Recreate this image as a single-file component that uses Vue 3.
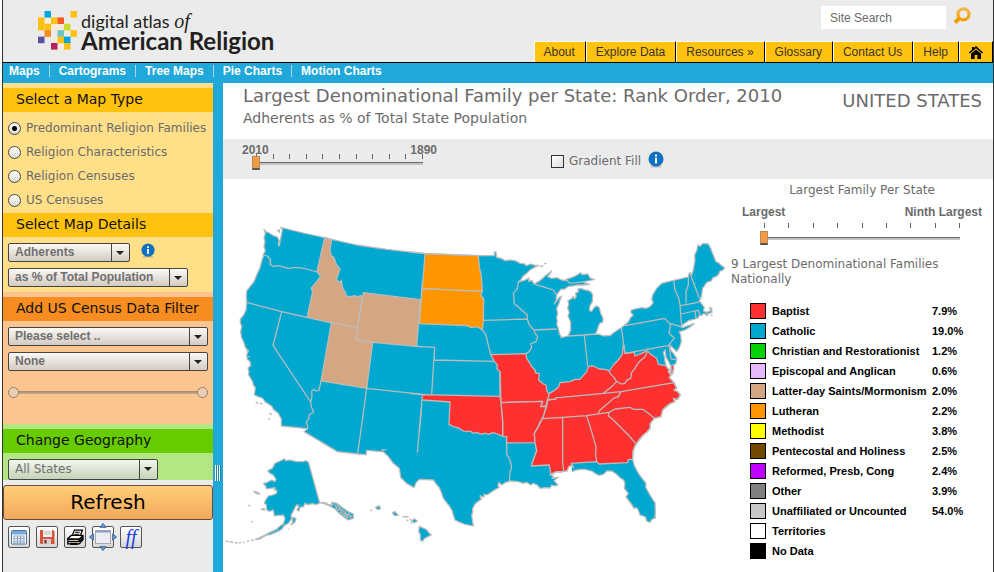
<script setup>
import { ref } from 'vue'

const yellow = '#fdc113'
const blue = '#00a9dd'
const mosaic = [
  [1, 0, blue], [5, 0, yellow], [0, 1, yellow], [2, 1, yellow], [3, 1, '#f05a22'],
  [0, 2, yellow], [1, 2, yellow], [4, 2, '#c8dc28'], [1, 3, '#f68b1f'], [3, 3, '#6cc5bf'],
  [5, 3, yellow], [0, 4, '#5a4fa2'], [3, 4, yellow], [4, 4, blue], [2, 5, '#b9205f'], [4, 5, yellow],
]
const mosaicPale = [[1, 1], [2, 2], [2, 4], [3, 5], [3, 2]]

const siteLinks = ['About', 'Explore Data', 'Resources »', 'Glossary', 'Contact Us', 'Help']
const sections = ['Maps', 'Cartograms', 'Tree Maps', 'Pie Charts', 'Motion Charts']
const mapTypes = [
  'Predominant Religion Families',
  'Religion Characteristics',
  'Religion Censuses',
  'US Censuses',
]
const mapType = ref(mapTypes[0])
const year = ref(0)
const rank = ref(0)
const gradientFill = ref(false)

const families = [
  ['Baptist', '7.9%', '#ff3030'],
  ['Catholic', '19.0%', '#00a8cf'],
  ['Christian and Restorationist', '1.2%', '#06d006'],
  ['Episcopal and Anglican', '0.6%', '#e6b9ff'],
  ['Latter-day Saints/Mormonism', '2.0%', '#d4a682'],
  ['Lutheran', '2.2%', '#ff9600'],
  ['Methodist', '3.8%', '#ffff00'],
  ['Pentecostal and Holiness', '2.5%', '#714a00'],
  ['Reformed, Presb, Cong', '2.4%', '#bf00ff'],
  ['Other', '3.9%', '#808080'],
  ['Unaffiliated or Uncounted', '54.0%', '#c8c8c8'],
  ['Territories', '', '#ffffff'],
  ['No Data', '', '#000000'],
]

/* Each map region has its own origin; one map unit is a third of a pixel. */
const westCoast =
  'M570 116L553 115 500 110 440 103 350 90 275 73 254 68 190 54 122 37 127 45 124 60 121 75 118 92 115 92 117 76 112 66 100 62 88 54 78 50 72 43 76 56 72 68 75 80 72 95 76 108 70 118 70 124 66 135 60 158 50 180 42 200 30 215 20 228 19 245 20 262 18 285 10 302 1 312 1 322 5 335 2 350 4 365 12 383 16 397 25 408 20 420 22 432 30 440 32 452 24 458 27 472 25 478 38 500 40 510 46 518 43 540 60 547 68 550 75 560 95 573 100 583 115 595 124 612 124 633 203 641 192 650 292 710 355 717 379 719 379 706 425 710'
const centralNorth =
  'M0 66L45 71 205 77 253 77 253 66 258 66 260 82 275 86 285 92 300 90 318 93 330 100 342 101 350 107 362 102 374 106 386 106 372 113 360 120 350 130 340 138 332 150 325 156 343 151 358 144 356 154 366 152 372 162'
const lakeMichigan =
  'M440 195L438 210 433 222 442 210 448 202 455 198 450 210 446 222 440 235 443 250 440 262 442 275 440 283 445 295 448 310 453 320 460 325 472 318'
const gulf =
  'M490 712L486 698 478 706 474 712 472 722 462 724 450 727 440 725 428 732 420 735 430 738 426 745 445 742 432 752 444 765 434 768 425 765 420 774 405 773 390 775 382 765 370 760 362 765 350 757 340 760 325 755 300 753 285 758 275 765 266 757 264 767 268 772 250 782 232 794 222 793 222 802 210 797 214 808 205 814 195 822 188 835 188 848 185 855 187 870 190 888 165 883 150 877 135 870 130 855 127 843 118 828 110 818 100 805 95 790 88 773 80 764 70 750 50 749 28 748 18 758 12 773 -10 760 -28 742 -30 727 -32 715 -50 700 -65 680 -80 665'
const eastCoast =
  'M25 303L72 300 105 297 118 298 130 303 142 302 150 302 165 290 184 278 204 262 212 248 220 240 213 234 213 226 225 222 245 218 258 220 270 215 280 203 275 193 278 180 290 160 305 145 341 136 385 126 387 115 392 113 395 120 400 105 402 92 405 78 404 60 411 45 413 30 420 34 430 25 445 27 452 40 458 56 463 68 468 80 476 84 485 92 494 98 488 106 480 108 476 118 468 125 460 127 453 138 440 142 432 155 428 158 426 172 424 185 418 198 426 208 433 217 430 228 440 232 452 227 448 217 455 220 456 232 440 238 430 236 425 242 418 240 415 248 405 252 385 257 370 268 362 275 368 278 403 265 395 273 375 285 358 290 362 300 364 320 358 338 350 350 342 342 330 330 332 345 340 355 350 370 348 385 340 391 342 400 337 418 332 420 334 402 332 392 326 380 318 366 316 345 310 352 314 370 316 385 320 395 328 405 325 410 333 420 328 428 342 443 350 460 342 465 353 470 361 480 352 494 340 490 345 500 330 506 318 515 308 525 303 545 283 550 275 560 271 566 270 580 262 590 250 600 240 610 232 622 224 635 219 650 218 673 223 692 235 715 250 735 258 745 257 757 270 780 278 793 285 803 286 830 285 848 276 853 270 862 260 858 258 850 255 845 240 840 235 826 230 818 222 820 215 808 205 795 198 785 205 776 197 765 193 760 195 745 191 735 180 728 170 718 155 708 140 708 130 718 118 721 110 718 95 708 75 703 60 703 45 706 36 710'
const michigan =
  'M25 303L32 285 32 262 24 243 28 232 23 220 26 208 24 197 28 195 36 190 40 183 43 192 49 184 46 175 56 170 53 163 62 160 75 165 84 166 92 170 98 180 97 200 90 212 88 226 95 229 102 218 110 212 118 218 122 235 126 244 129 250 128 262 120 264 116 272 110 290 105 297'
const south =
  'M-86 693L-32 690 -28 717 -10 710 11 709 22 707 25 697 33 691 41 698 34 685 110 680 117 687 203 683 205 673 218 673 219 650 224 635 232 622 250 600 262 590 270 580 271 566 283 550 303 545 308 525 330 506 345 500 340 490 352 494 361 480 353 470 342 465 350 460 342 443 328 428 333 420 325 410 328 405 316 392 295 388 290 370 272 358 262 347 245 355 225 363 223 352 195 355 190 325 187 358 172 378 160 390 148 408 135 403 118 402 100 393 85 395 80 410 60 433 45 433 30 440 0 443 -5 457 -15 465 -32 475 -36 492 -40 513 -50 545 -65 575 -77 595 -75 623 -70 647 -80 675Z'
</script>

<template>
  <div class="page">
    <header class="top">
      <h1 class="brand">
        <svg class="mosaic" viewBox="0 0 39 39" aria-hidden="true">
          <rect v-for="[c, r] in mosaicPale" :key="`p${c}${r}`" :x="c * 6.5" :y="r * 6.4" width="6.5" height="6.4" fill="#f6ecd9" />
          <rect v-for="[c, r, fill] in mosaic" :key="`${c}${r}`" :x="c * 6.5" :y="r * 6.4" width="6.5" height="6.6" :fill="fill" />
        </svg>
        <span class="words">
          <span class="line1">digital atlas <em>of</em></span>
          <span class="line2">American Religion</span>
        </span>
      </h1>
      <div class="top-right">
        <form class="search" role="search" @submit.prevent>
          <input type="text" value="Site Search" aria-label="Site Search" />
          <button type="submit" aria-label="Search">
            <svg viewBox="0 0 18 18" width="18" height="18">
              <defs>
                <linearGradient id="lens" x1="0" y1="0" x2="0" y2="1">
                  <stop offset="0" stop-color="#f3b94e" />
                  <stop offset="1" stop-color="#ee9f04" />
                </linearGradient>
              </defs>
              <circle cx="10.5" cy="7.3" r="5.5" fill="none" stroke="url(#lens)" stroke-width="3.2" />
              <path d="M6.2 11.5L2 15.6" stroke="#ee9f04" stroke-width="4" />
            </svg>
          </button>
        </form>
        <nav class="site">
          <a v-for="l in siteLinks" :key="l" href="#">{{ l }}</a>
          <a class="home" href="#" aria-label="Home">
            <svg viewBox="0 0 14 13" width="14" height="13">
              <path d="M7 0L14 6.5 13 7.6 7 2.2 1 7.6 0 6.5 3 3.7V1h2v1z" />
              <path d="M7 3.4l5 4.4V13H8.400V9H5.600v4H2V7.800z" />
            </svg>
          </a>
        </nav>
      </div>
    </header>

    <nav class="sections">
      <a v-for="s in sections" :key="s" href="#">{{ s }}</a>
    </nav>

    <div class="body">
      <aside class="side">
        <section class="block amber">
          <h2>Select a Map Type</h2>
          <div class="radios">
            <label v-for="t in mapTypes" :key="t">
              <input v-model="mapType" type="radio" name="type" :value="t" />{{ t }}
            </label>
          </div>
          <h2>Select Map Details</h2>
          <div class="fields">
            <div class="field-row">
              <span class="combo w-short"><select aria-label="Measure"><option>Adherents</option></select></span>
              <svg class="info" viewBox="0 0 16 17" width="14" height="15" role="img" aria-label="Info">
                <ellipse cx="8" cy="15.500" rx="6" ry="1" fill="#c9b98a" />
                <circle cx="8" cy="8" r="7.500" fill="#0f6fc0" />
                <path d="M7 3.500h2v2H7zM7 6.800h2V12.500H7z" fill="#fff" />
              </svg>
            </div>
            <span class="combo w-mid"><select aria-label="Unit"><option>as % of Total Population</option></select></span>
          </div>
        </section>

        <section class="block peach">
          <h2>Add US Census Data Filter</h2>
          <div class="fields">
            <span class="combo"><select aria-label="Census topic"><option>Please select ..</option></select></span>
            <span class="combo"><select aria-label="Census measure"><option>None</option></select></span>
            <div class="span-slider" role="group" aria-label="Filter range"><i></i><i></i></div>
          </div>
        </section>

        <section class="block green">
          <h2>Change Geography</h2>
          <div class="fields">
            <span class="combo plain w-geo"><select aria-label="Geography"><option>All States</option></select></span>
          </div>
        </section>

        <button class="refresh" type="button">Refresh</button>

        <div class="tools">
          <button type="button" aria-label="Data table">
            <svg viewBox="0 0 16 16" width="16" height="16">
              <rect x=".5" y="1.500" width="15" height="13.500" rx="1" fill="#fff" stroke="#4a78a8" />
              <path d="M1 2h14v3.500H1z" fill="#7aa7d8" />
              <path d="M2.500 7h11M2.500 9.500h11M2.500 12h11M2.500 14h11M3 7v7M6.500 7v7M9.500 7v7M13 7v7" stroke="#8aa4c0" />
            </svg>
          </button>
          <button type="button" aria-label="Save">
            <svg viewBox="0 0 16 16" width="16" height="16">
              <path d="M1 1h13l1.500 1.500V15H2L1 14z" fill="#d8533c" />
              <path d="M4 1h9v7H4z" fill="#f4f4f4" />
              <path d="M5 3h7M5 5h7" stroke="#bbb" />
              <path d="M4 10h8v5H4z" fill="#d0d0d0" />
              <path d="M5.500 11h2v3.500h-2z" fill="#7b1f14" />
            </svg>
          </button>
          <button type="button" aria-label="Print">
            <svg viewBox="0 0 16 16" width="17" height="17">
              <path d="M5 6l2-5h7.500l-2 5.500z" fill="#fff" stroke="#000" stroke-width="1.200" />
              <path d="M7.500 3h4.500M7 5h4.500" stroke="#000" />
              <path d="M.8 9L4 6h11v4l-3.500 4H.8z" fill="#fff" stroke="#000" stroke-width="1.300" />
              <path d="M1 9.500h10.500L15 6.500M1 11.800h10.500V9.500M11.500 12L15 8.500" fill="none" stroke="#000" stroke-width="1.500" />
              <path d="M6.500 10.700h3" stroke="#e0c800" />
              <path d="M3 14h7" stroke="#000" stroke-width="2" />
            </svg>
          </button>
          <button type="button" aria-label="Fit to window">
            <svg class="spill" viewBox="0 0 28 28" width="28" height="28">
              <rect x="6.500" y="7.500" width="15" height="13" fill="#ececf2" stroke="#a9a9b4" />
              <path d="M7 8.500h14" stroke="#8d9fc0" stroke-width="2" />
              <path d="M14 .5l3 3.800h-6zM14 27.500l3-3.800h-6zM.5 14l3.800-3v6zM27.500 14l-3.800-3v6z" fill="#6f9fd8" stroke="#3a5f96" />
            </svg>
          </button>
          <button class="ff" type="button" aria-label="Font">ff</button>
        </div>
      </aside>

      <div class="splitter"><span class="grip"></span></div>

      <main class="main">
        <div class="titles">
          <div>
            <h2>Largest Denominational Family per State: Rank Order, 2010</h2>
            <p>Adherents as % of Total State Population</p>
          </div>
          <strong>UNITED STATES</strong>
        </div>

        <div class="controls">
          <div class="slider years">
            <div class="ends"><span>2010</span><span>1890</span></div>
            <div class="ticks"><i v-for="n in 11" :key="n"></i></div>
            <input v-model="year" type="range" min="0" max="10" aria-label="Year" />
          </div>
          <label class="check"><input v-model="gradientFill" type="checkbox" />Gradient Fill</label>
          <svg class="info" viewBox="0 0 16 17" width="16" height="17" role="img" aria-label="Info">
            <ellipse cx="8" cy="15.500" rx="6" ry="1" fill="#bbb" />
            <circle cx="8" cy="8" r="7.500" fill="#0f6fc0" />
            <path d="M7 3.500h2v2H7zM7 6.800h2V12.500H7z" fill="#fff" />
          </svg>
        </div>

        <div class="view">
          <svg class="map" viewBox="223 179 502 393" role="img" aria-label="United States by largest denominational family">
            <g transform="translate(240 215) scale(.33333)">
              <path class="catholic bare" :d="westCoast + 'L570 730Z'" />
              <path class="lds" d="M254 68L232 165 232 171 242 184 230 200 214 219 218 230 201 307 274 324 353 337 367 248 362 241 355 246 345 242 330 245 318 243 318 236 308 220 304 197 299 202 289 195 300 162 289 148 282 128 274 122 270 105 275 73Z" />
              <path class="lds" d="M370 233L541 254 530 394 398 382 348 374 353 337Z" />
              <path class="lds" d="M274 324L353 337 348 374 398 382 380 520 243 498Z" />
              <path class="edge" :d="westCoast" />
              <path class="edge" d="M70 120L82 123 92 135 90 148 98 154 116 152 134 157 145 160 160 158 180 158 200 162 232 171M20 262L125 290 201 307M125 290L99 391 212 561M243 498L237 526 228 528 222 523 215 528 216 545 212 561 214 575 221 591 207 600 206 612 198 622 203 632 203 641M380 520L353 717M380 520L548 538M428 712L427 704 532 712 547 556M553 115L538 325M530 394L570 397" />
              <path class="isle" d="M47 562l8 3M60 565l7 2M88 594l7 5M85 610l4 4M117 42l2 12M112 46l5 4M20 408l8-2M22 425l8 0" />
            </g>

            <g transform="translate(410 230) scale(.33333)">
              <path class="catholic bare" :d="centralNorth + 'L405 172 430 180 ' + lakeMichigan.slice(1) + 'L480 400 470 600 ' + gulf.slice(1) + 'L36 600 36 71Z'" />
              <path class="catholic" d="M372 162L385 155 395 148 405 138 425 123 420 132 413 140 425 145 440 143 455 150 470 152 484 146 495 141 500 147 515 145 522 158 538 163 520 165 500 165 488 168 475 169 465 177 452 178 440 195 430 180 405 172Z" />
              <path class="catholic" d="M468 148L484 143 496 138 512 128 516 134 534 132 540 144 553 148 538 152 522 155 500 158 480 160Z" />
              <path class="lutheran" d="M45 71L205 77 208 110 214 140 217 184 37 176Z" />
              <path class="lutheran" d="M37 176L217 184 212 196 221 207 220 275 217 300 207 293 195 290 185 293 170 287 28 281Z" />
              <path class="baptist" d="M242 374L348 371 350 385 360 400 365 410 375 420 377 429 388 430 386 450 400 462 408 465 410 480 415 490 424 500 412 510 408 528 392 530 398 514 273 518 270 425 260 415 263 407 253 393Z" />
              <path class="baptist" d="M273 518L398 514 392 530 408 530 400 560 388 580 385 590 373 610 375 638 290 639 290 620 278 619 278 575Z" />
              <path class="baptist" d="M37 494L270 499 273 518 278 575 278 619 262 612 250 608 235 613 225 609 215 613 200 607 190 610 180 603 170 605 160 603 150 596 140 592 130 590 117 583 120 516 36 510Z" />
              <path class="edge" :d="centralNorth" />
              <path class="edge" :d="lakeMichigan" />
              <path class="edge" :d="gulf" />
              <path class="edge" d="M217 300L228 315 235 345 242 374M221 271L352 267M21 349L74 352 72 390 252 394M74 352L65 492M0 490L37 494M270 425V499M36 510L22 668M325 156L322 175 310 190 312 205 312 220 335 240 352 255 352 267 358 285 372 300 440 297M372 300L375 310 383 320 378 335 362 342 365 352 358 365 348 371M453 322L458 390 462 420 455 445M290 639V672L300 690 305 710 300 730 298 753M375 638L380 662 370 690 364 708" />
              <path class="isle" d="M390 110l10-3M402 102l8-3" />
            </g>

            <g transform="translate(560 235) scale(.33333)">
              <path class="catholic bare" :d="eastCoast + 'L34 685 20 600 0 400 0 310Z'" />
              <path class="catholic bare" :d="michigan + 'Z'" />
              <path class="baptist" :d="south" />
              <path class="baptist" d="M332 392L342 390 337 418 332 416Z" />
              <path class="edge" :d="eastCoast" />
              <path class="edge" :d="michigan" />
              <path class="edge" d="M3 308L25 303M73 300L83 393M184 278L195 355 327 331M195 272L315 250 325 262 332 268 330 280 327 295 343 310 330 325 327 331 333 372 347 373M332 266L362 275M341 136L345 165 355 185 360 210 362 237 365 275M385 126L385 150 378 170 378 205M362 212L410 203 420 198M390 115L418 190M362 237L405 228 415 226 420 240M405 228L408 250" />
              <path class="edge" d="M262 350L255 365 240 378 232 388 225 400 215 412 212 430 200 436 195 445 185 447 170 440 160 425 150 415 148 408M170 440L155 455 130 475M-38 495L-12 492 -12 488 5 487 130 475 183 470 342 443M183 470L175 485 160 490 150 500 135 512 120 525 115 535M-52 551L8 547 80 542 147 532 165 522 210 517 220 523 248 523 265 535 283 550M147 532L145 542 160 555 175 570 190 585 205 600 227 625M80 542L95 590 108 635 107 660 110 680M8 547V680L11 709" />
              <path class="isle" d="M437 243l8-3M452 241l6 0M284 852l3-6" />
            </g>

            <g transform="translate(225 440) scale(.33333)">
              <path class="catholic" d="M150 70L165 63 172 60 178 56 182 62 195 60 215 65 235 65 242 62 250 66 284 188 275 194 262 191 248 194 240 190 235 200 225 202 222 213 216 210 222 196 214 195 205 213 198 226 200 236 190 250 178 256 170 268 150 278 135 284 125 285 105 297 92 299 118 286 135 277 155 268 165 258 175 252 180 235 175 225 160 226 148 228 145 210 134 214 125 210 124 195 118 190 122 180 130 168 143 165 155 160 155 150 148 150 150 143 125 147 122 138 115 130 125 128 140 120 150 125 153 118 145 105 135 100 128 92 142 85Z" />
              <path class="catholic" d="M284 188L298 187 310 193 322 196 320 186 335 190 343 196 355 205 370 215 385 222 385 235 370 240 358 232 345 222 330 207 318 200 300 192Z" />
              <path class="isle" d="M325 190l12 14M335 192l10 18M330 204l12 8M343 200l8 20M350 206l12 20M345 216l14 10M360 212l10 22M356 226l14 8M370 218l8 18M364 222l18 8" />
              <path class="catholic" d="M203 232L213 235 210 246 198 255 203 244ZM86 154L98 157 104 162 94 161ZM108 207L118 205 118 211Z" />
              <path class="isle" d="M2 303l8 2M14 306l10 0M30 307l8 2M42 309l6-1M54 307l5 0M66 304l6-1M78 302l8-2M90 298l8 0M70 195l5 4M80 243l3 4M190 268l3 0" />
              <path class="catholic" d="M452 202L463 197 467 206 457 209ZM502 218L510 215 520 226 508 227ZM555 238L562 242 568 236 577 243 567 249ZM583 259L598 266 606 270 610 277 619 285 605 292 598 296 592 304 586 300 586 283 581 275Z" />
              <path class="isle" d="M436 213l5-4M533 230l18 1M545 239l5 4M557 250l4-2" />
            </g>
          </svg>

          <aside class="legend">
            <h3>Largest Family Per State</h3>
            <div class="slider ranks">
              <div class="ends"><span>Largest</span><span>Ninth Largest</span></div>
              <div class="ticks"><i v-for="n in 9" :key="n"></i></div>
              <input v-model="rank" type="range" min="0" max="8" aria-label="Rank" />
            </div>
            <p>9 Largest Denominational Families Nationally</p>
            <table>
              <tbody>
                <tr v-for="[name, pct, color] in families" :key="name">
                  <td><span class="swatch" :style="{ background: color }"></span></td>
                  <th scope="row">{{ name }}</th>
                  <td>{{ pct }}</td>
                </tr>
              </tbody>
            </table>
          </aside>
        </div>
      </main>
    </div>
  </div>
</template>

<style>
body {
  background: #fff;
}
</style>

<style scoped>
* {
  box-sizing: border-box;
}
.page {
  display: flex;
  flex-direction: column;
  min-height: 100vh;
  margin-left: 2px;
  border: solid #333;
  border-width: 0 1px;
  color: #6b6b6b;
  font: 12px/15px 'DejaVu Sans', sans-serif;
}
h1, h2, h3, p {
  margin: 0;
  font-weight: normal;
}
a {
  text-decoration: none;
}
button, input, select {
  margin: 0;
  padding: 0;
  font: inherit;
  color: inherit;
}

.top {
  display: flex;
  justify-content: space-between;
  background: #ebebeb;
  border-bottom: 1px solid #000;
}
.brand {
  display: flex;
  padding: 11px 0 0 35px;
  gap: 4px;
  color: #231f20;
}
.mosaic {
  width: 39px;
  height: 39px;
}
.words {
  display: flex;
  flex-direction: column;
  font-family: Lato, sans-serif;
  white-space: nowrap;
}
.line1 {
  font-size: 18px;
  line-height: 20px;
}
.line1 em {
  font: italic 20px/18px 'Liberation Serif', serif;
}
.line2 {
  font-size: 24px;
  line-height: 20px;
  font-weight: bold;
}
.top-right {
  display: flex;
  flex-direction: column;
  justify-content: space-between;
  align-items: flex-end;
  height: 62px;
  padding-top: 6px;
  font-family: 'Liberation Sans', sans-serif;
}
.search {
  display: flex;
  gap: 7px;
  padding-right: 22px;
}
.search input {
  width: 125px;
  height: 23px;
  padding-left: 9px;
  border: 0;
  background: #fff;
}
.search button {
  display: flex;
  height: 18px;
  margin-top: 1px;
  border: 0;
  background: none;
}
.site {
  display: flex;
}
.site a {
  display: flex;
  align-items: center;
  height: 21px;
  padding: 0 10px 0 9px;
  border: solid #fff;
  border-width: 1px 0 0 1px;
  border-right: 1px solid #000;
  background: #ffc20f;
  color: #3b3525;
}
.site .home {
  padding: 0 9px;
}
.site svg {
  fill: #000;
}

.sections {
  display: flex;
  height: 20px;
  padding: 2px 0 0 6px;
  background: #21a8da;
  font: bold 12px/12px 'Liberation Sans', sans-serif;
}
.sections a {
  height: 12px;
  color: #fff;
}
.sections a + a {
  margin-left: 9px;
  padding-left: 9px;
  border-left: 1px solid #a5d5e8;
}

.body {
  display: flex;
  flex: 1;
}
.side {
  flex: 0 0 210px;
  background: #ebebeb;
}
.block {
  padding-top: 5px;
}
.block h2 {
  padding: 0 0 2px 13px;
  color: #111;
  font-size: 14px;
  line-height: 22px;
}
.amber {
  background: #ffdf88;
}
.amber h2 {
  background: #ffc20f;
}
.peach {
  min-height: 132px;
  background: #fcc48e;
}
.peach h2 {
  background: #f78d20;
}
.green {
  background: #b4e681;
}
.green h2 {
  background: #6c0;
}
.radios {
  padding: 4px 0 1px 5px;
}
.radios label {
  display: flex;
  align-items: center;
  gap: 5px;
  height: 24px;
  white-space: nowrap;
}
.radios input {
  appearance: none;
  flex: none;
  width: 13px;
  height: 13px;
  border: 1px solid #444;
  border-radius: 50%;
  background: linear-gradient(#fff, #dcd8ce);
}
.radios input:checked {
  background: radial-gradient(circle, #000 0 2px, transparent 3px), linear-gradient(#fff, #dcd8ce);
}
.fields {
  display: flex;
  flex-direction: column;
  gap: 6px;
  padding: 6px 5px 5px;
}
.field-row {
  display: flex;
  gap: 11px;
  height: 19px;
}
.combo {
  display: flex;
  position: relative;
  height: 19px;
  border: 1px solid #444;
  border-radius: 2px;
  background: linear-gradient(#fbf9f6, #d3cbc3);
}
.combo select {
  appearance: none;
  flex: 1;
  padding-left: 6px;
  border: 0;
  background: none;
  color: #707070;
  font: bold 12px/17px 'Liberation Sans', sans-serif;
}
.combo::before {
  content: '';
  position: absolute;
  right: 17px;
  top: 0;
  bottom: 0;
  border-left: 1px solid #444;
}
.combo::after {
  content: '';
  position: absolute;
  right: 5px;
  top: 7px;
  border: 4px solid transparent;
  border-top-color: #222;
  border-bottom: 0;
}
.w-short {
  width: 122px;
}
.w-mid {
  width: 180px;
}
.w-geo {
  width: 150px;
}
.green .fields {
  padding-bottom: 0;
}
.plain {
  height: 21px;
  background: linear-gradient(#f3f8ee, #c5d2b8);
}
.plain select {
  font: 12px/17px 'DejaVu Sans', sans-serif;
}
.span-slider {
  display: flex;
  justify-content: space-between;
  margin-top: 10px;
  background: linear-gradient(#a08870, #c8ab8c) center / 100% 3px no-repeat;
}
.span-slider i {
  width: 11px;
  height: 11px;
  border: 1px solid #94806c;
  border-radius: 50%;
  background: #eacfb2;
}
.refresh {
  display: block;
  width: 100%;
  height: 35px;
  margin-top: 5px;
  border: 1px solid #6b4a42;
  border-radius: 3px;
  background: linear-gradient(#ffce78, #f2a85c);
  color: #000;
  font-size: 20px;
}
.tools {
  display: flex;
  gap: 6px;
  padding: 6px 5px;
}
.tools button {
  display: flex;
  align-items: center;
  justify-content: center;
  width: 22px;
  height: 22px;
  border: 1px solid #555;
  border-radius: 2px;
  background: linear-gradient(#fff, #d6d6d6);
}
.tools svg {
  flex: none;
}
.tools .ff {
  color: #1c3fe0;
  font: italic 20px/18px 'Liberation Serif', serif;
}

.splitter {
  flex: 0 0 10px;
  padding: 382px 2px 0;
  background: #21a8da;
}
.grip {
  display: block;
  height: 16px;
  background: repeating-linear-gradient(90deg, #fff 0 1px, #2580a4 1px 2px);
}

.main {
  flex: 1;
  min-width: 0;
  background: #fff;
}
.titles {
  display: flex;
  justify-content: space-between;
  min-height: 56px;
  padding: 3px 11px 0 20px;
}
.titles h2 {
  font-size: 18px;
  line-height: 20px;
}
.titles p {
  font-size: 14px;
  line-height: 24px;
}
.titles strong {
  padding-top: 5px;
  font-size: 18px;
  line-height: 20px;
  font-weight: normal;
}
.controls {
  display: flex;
  height: 40px;
  padding-left: 19px;
  background: #ebebeb;
}
.slider {
  font-family: 'Liberation Sans', sans-serif;
  font-weight: bold;
}
.ends, .ticks {
  display: flex;
  justify-content: space-between;
}
.ticks i {
  width: 1px;
  height: 5px;
  background: #666;
}
.slider input {
  appearance: none;
  display: block;
  width: 100%;
  height: 14px;
  background: linear-gradient(#666 0 1px, #c4c4c4 1px) center / calc(100% - 8px) 3px no-repeat;
}
.slider input::-webkit-slider-thumb {
  appearance: none;
  width: 8px;
  height: 14px;
  border: 1px solid #b98a5c;
  border-bottom: 2px solid #555;
  background: #f39a45;
}
.years {
  width: 195px;
  padding-top: 4px;
}
.years .ends {
  height: 11px;
}
.years .ticks {
  padding: 0 14px;
}
.years input {
  width: 175px;
  margin: -3px 0 0 10px;
}
.check {
  display: flex;
  align-items: center;
  gap: 5px;
  margin-left: 114px;
  padding-top: 4px;
}
.check input {
  appearance: none;
  width: 13px;
  height: 13px;
  border: 1px solid #333;
  background: linear-gradient(135deg, #fff, #ddd);
}
.controls .info {
  margin: 12px 0 0 7px;
}

.view {
  display: grid;
  grid-template-columns: minmax(0, 1fr) 268px;
}
.map {
  display: block;
  width: 100%;
}
.map path {
  stroke: #bcbcbc;
  stroke-width: 3.8;
  stroke-linejoin: round;
}
.map .bare {
  stroke: none;
}
.map .edge, .map .isle {
  fill: none;
}
.map .isle {
  stroke: #b4b8b6;
  stroke-width: 4;
}
.catholic {
  fill: #00a8cf;
}
.baptist {
  fill: #ff3030;
}
.lutheran {
  fill: #ff9600;
}
.lds {
  fill: #d4a682;
}
.legend {
  padding: 4px 11px 0 6px;
}
.legend h3 {
  padding-left: 11px;
  font-size: 12px;
  line-height: 15px;
  text-align: center;
}
.ranks {
  margin: 7px 0 12px 11px;
}
.ranks .ticks {
  padding: 3px 22px;
}
.ranks input {
  width: calc(100% - 36px);
  margin-left: 18px;
}
.legend table {
  margin: 14px 0 0 19px;
  border-spacing: 0;
  color: #000;
  font: bold 11px/15px 'Liberation Sans', sans-serif;
}
.legend td, .legend th {
  height: 20px;
  padding: 0;
  text-align: left;
  white-space: nowrap;
}
.legend td:first-child {
  width: 22px;
}
.legend th {
  width: 160px;
}
.swatch {
  display: block;
  width: 16px;
  height: 16px;
  border: 1px solid #000;
}
</style>
